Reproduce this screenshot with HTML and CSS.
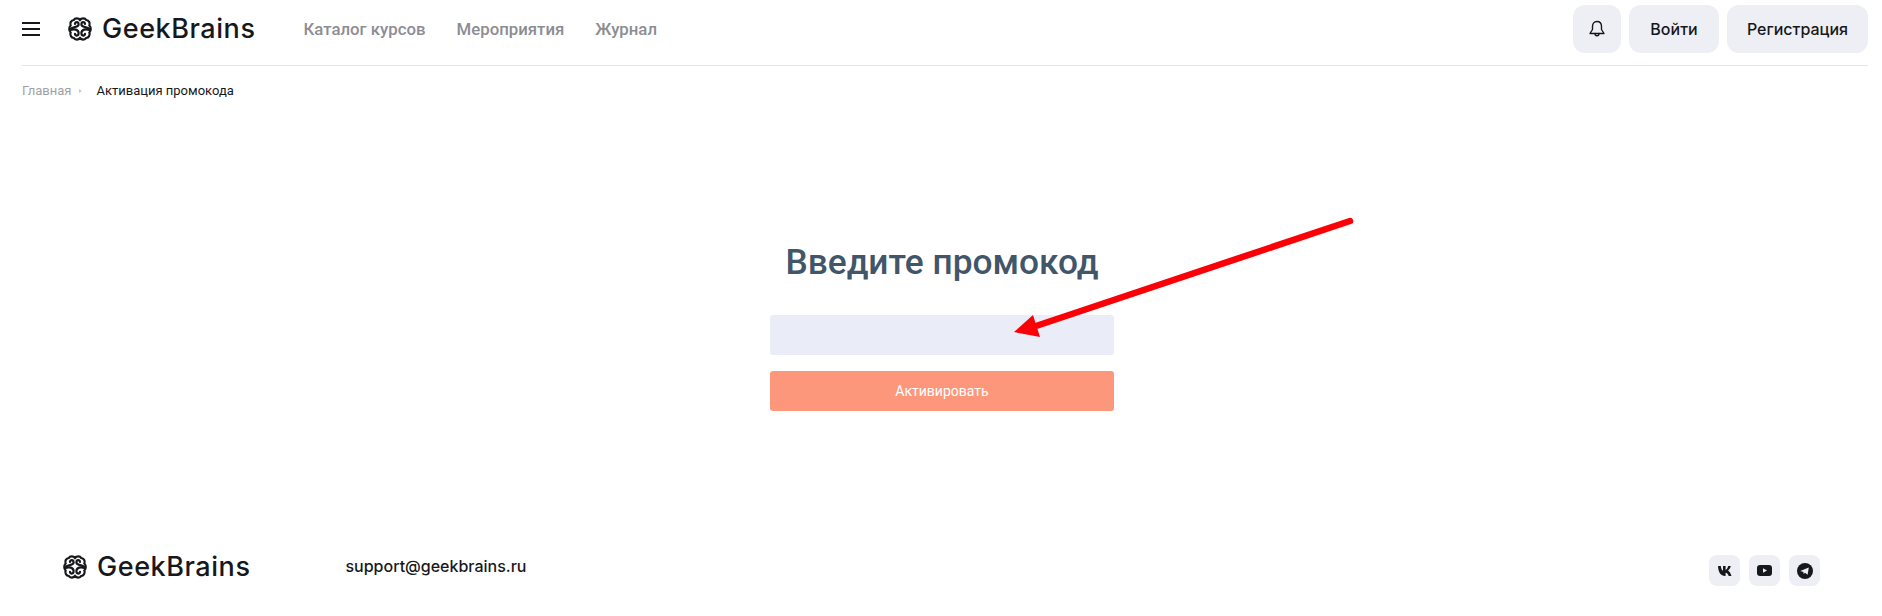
FILE: index.html
```html
<!DOCTYPE html>
<html lang="ru">
<head>
  <meta charset="UTF-8" />
  <title>Активация промокода</title>
  <link rel="stylesheet" href="styles.css">
</head>
<body>
  <header class="header">
    <div class="header-left">
      <button class="burger" aria-label="Меню"><span></span><span></span><span></span></button>
      <a class="logo" href="#">
        <svg class="logo-icon" viewBox="0 0 24 24" fill="none" stroke="#17181c" stroke-width="2.2" stroke-linecap="round">
          <path d="M12 3C10.500 1 7 .8 5.800 3 3.200 3.300 1.600 6 2.600 8.500 .8 10.500 .8 13.500 2.600 15.500 1.600 18 3.400 20.700 5.800 21 7 23.200 10.500 23 12 21 13.500 23 17 23.200 18.200 21 20.600 20.700 22.400 18 21.400 15.500 23.200 13.500 23.200 10.500 21.400 8.500 22.400 6 20.800 3.300 18.200 3 17 .8 13.500 1 12 3Z"/>
          <path d="M7 7C7 4.500 10.600 4.500 10.600 7.500 10.600 10.500 5 9.500 2.500 12"/>
          <path d="M17 7C17 4.500 13.400 4.500 13.400 7.500 13.400 10.500 19 9.500 21.500 12"/>
          <path d="M2.500 13C6 11.500 10.600 12.500 10.600 16 10.600 19.500 7 19 7 16.800"/>
          <path d="M21.500 13C18 11.500 13.400 12.500 13.400 16 13.400 19.500 17 19 17 16.800"/>
        </svg>
        <span class="logo-text">GeekBrains</span>
      </a>
      <nav class="nav">
        <a href="#">Каталог курсов</a>
        <a href="#">Мероприятия</a>
        <a href="#">Журнал</a>
      </nav>
    </div>
    <div class="header-right">
      <button class="btn btn-bell" aria-label="Уведомления">
        <svg width="18" height="18" viewBox="0 0 18 18" fill="none" stroke="#17181c" stroke-width="1.4" stroke-linejoin="round" stroke-linecap="round">
          <path d="M9 1.500C5.700 1.500 4.500 4 4.500 6.500V9.500L2 13.500H16L13.500 9.500V6.500C13.500 4 12.300 1.500 9 1.500Z"/>
          <path d="M7 13.500C7 16.500 11 16.500 11 13.500"/>
        </svg>
      </button>
      <button class="btn btn-login">Войти</button>
      <button class="btn btn-register">Регистрация</button>
    </div>
  </header>

  <div class="breadcrumbs">
    <a href="#">Главная</a>
    <span class="crumb-sep"></span>
    <span class="crumb-current">Активация промокода</span>
  </div>

  <main class="promo">
    <h1>Введите промокод</h1>
    <input class="promo-input" type="text" />
    <button class="promo-btn">Активировать</button>
  </main>

  <svg class="arrow" width="420" height="150" viewBox="0 0 420 150">
    <path d="M395 8L81 113" stroke="#fb0007" stroke-width="6.500" stroke-linecap="round"/>
    <path d="M59 119L78 102L85 124Z" fill="#fb0007"/>
  </svg>

  <footer class="footer">
    <a class="logo logo-footer" href="#">
      <svg class="logo-icon" viewBox="0 0 24 24" fill="none" stroke="#17181c" stroke-width="2.2" stroke-linecap="round">
        <path d="M12 3C10.500 1 7 .8 5.800 3 3.200 3.300 1.600 6 2.600 8.500 .8 10.500 .8 13.500 2.600 15.500 1.600 18 3.400 20.700 5.800 21 7 23.200 10.500 23 12 21 13.500 23 17 23.200 18.200 21 20.600 20.700 22.400 18 21.400 15.500 23.200 13.500 23.200 10.500 21.400 8.500 22.400 6 20.800 3.300 18.200 3 17 .8 13.500 1 12 3Z"/>
        <path d="M7 7C7 4.500 10.600 4.500 10.600 7.500 10.600 10.500 5 9.500 2.500 12"/>
        <path d="M17 7C17 4.500 13.400 4.500 13.400 7.500 13.400 10.500 19 9.500 21.500 12"/>
        <path d="M2.500 13C6 11.500 10.600 12.500 10.600 16 10.600 19.500 7 19 7 16.800"/>
        <path d="M21.500 13C18 11.500 13.400 12.500 13.400 16 13.400 19.500 17 19 17 16.800"/>
      </svg>
      <span class="logo-text">GeekBrains</span>
    </a>
    <a class="footer-mail" href="#">support@geekbrains.ru</a>
    <div class="socials">
      <a class="social" href="#" aria-label="VK">
        <svg width="16" height="10" viewBox="0 0 16 10"><path fill="#17181c" d="M0 0H2.800C3 2.500 4.100 4.400 5 4.700V0H7.600V3.900C8.500 3.800 9.700 2 10.200 0H12.800C12.400 2 11.100 3.700 10 4.400 11.100 5 12.700 6.600 13.500 10H10.700C10.200 8.300 8.900 6.800 7.600 6.700V10H7C3 10 .2 6.500 0 0Z" transform="translate(1 0)"/></svg>
      </a>
      <a class="social" href="#" aria-label="YouTube">
        <svg width="15" height="11" viewBox="0 0 15 11"><rect width="15" height="11" rx="3" fill="#17181c"/><path d="M6 3.200L10 5.500L6 7.800Z" fill="#eeeff4"/></svg>
      </a>
      <a class="social" href="#" aria-label="Telegram">
        <svg width="16" height="16" viewBox="0 0 16 16"><circle cx="8" cy="8" r="8" fill="#17181c"/><path d="M3.300 7.900L11.800 4.400L10.600 11.700L8 9.800L6.700 11L6.400 9L3.300 7.900Z" fill="#eeeff4"/></svg>
      </a>
    </div>
  </footer>
</body>
</html>
```

FILE: styles.css
```css
* { box-sizing: border-box; }
body {
  margin: 0;
  height: 616px;
  background: #fff;
  color: #17181c;
  font-family: Inter, "Noto Sans", sans-serif;
  position: relative;
  overflow: hidden;
}
a { text-decoration: none; color: inherit; }
button { font-family: inherit; border: none; cursor: pointer; }

.header {
  display: flex;
  justify-content: space-between;
  align-items: center;
  height: 66px;
  margin: 0 14px 0 22px;
  padding-bottom: 7px;
  border-bottom: 1px solid #e4e5e9;
}
.header-left { display: flex; align-items: center; }
.header-right { display: flex; gap: 8px; }

.burger {
  display: flex;
  flex-direction: column;
  justify-content: space-between;
  width: 18px;
  height: 14px;
  padding: 0;
  margin-right: 28px;
  background: none;
}
.burger span { display: block; height: 2px; background: #17181c; }

.logo { display: flex; align-items: center; }
.logo-icon { width: 24px; height: 24px; }
.logo-text {
  margin-left: 10px;
  font-family: Inter, sans-serif;
  font-size: 27px;
  font-weight: 500;
  line-height: 24px;
  letter-spacing: 0.55px;
}

.nav { display: flex; gap: 31px; margin-left: 48px; }
.nav a {
  color: #8c8d94;
  font-family: Roboto, sans-serif;
  font-size: 16.8px;
  font-weight: 500;
}

.btn {
  height: 48px;
  border-radius: 12px;
  background: #eeeff4;
  color: #17181c;
  font-size: 16px;
  font-weight: 500;
}
.btn-bell { display: flex; align-items: center; justify-content: center; width: 48px; }
.btn-login { width: 90px; }
.btn-register { width: 141px; }

.breadcrumbs {
  display: flex;
  align-items: center;
  margin: 17px 0 0 22px;
  font-family: Roboto, sans-serif;
  font-size: 13px;
  line-height: 16px;
}
.breadcrumbs a { color: #a0a1a8; }
.crumb-sep {
  width: 0;
  height: 0;
  margin: 0 14px 0 8px;
  border-left: 3px solid #c9cad0;
  border-top: 2.5px solid transparent;
  border-bottom: 2.500px solid transparent;
}

.promo {
  display: flex;
  flex-direction: column;
  align-items: center;
  width: 344px;
  margin: 0 auto;
  padding-top: 142px;
  transform: translateX(1px);
}
.promo h1 {
  margin: 0 0 32px;
  color: #42566a;
  font-family: Roboto, sans-serif;
  font-size: 35.3px;
  font-weight: 500;
  line-height: 42px;
  white-space: nowrap;
}
.promo-input {
  width: 100%;
  height: 40px;
  border: none;
  border-radius: 3px;
  background: #eaedf7;
}
.promo-btn {
  width: 100%;
  height: 40px;
  margin-top: 16px;
  border-radius: 3px;
  background: #fc977b;
  color: #fff;
  font-family: Roboto, sans-serif;
  font-size: 14px;
}

/* стрелка поверх формы */
.arrow {
  position: absolute;
  left: 955px;
  top: 213px;
}

.footer {
  position: absolute;
  left: 63px;
  right: 62px;
  top: 555px;
  display: flex;
  align-items: flex-start;
}
.footer-mail {
  margin-left: 95px;
  font-size: 16px;
  font-weight: 500;
  line-height: 22px;
}
.socials { display: flex; gap: 9px; margin-left: auto; }
.social {
  display: flex;
  align-items: center;
  justify-content: center;
  width: 31px;
  height: 31px;
  border-radius: 8px;
  background: #eeeff4;
}
```
